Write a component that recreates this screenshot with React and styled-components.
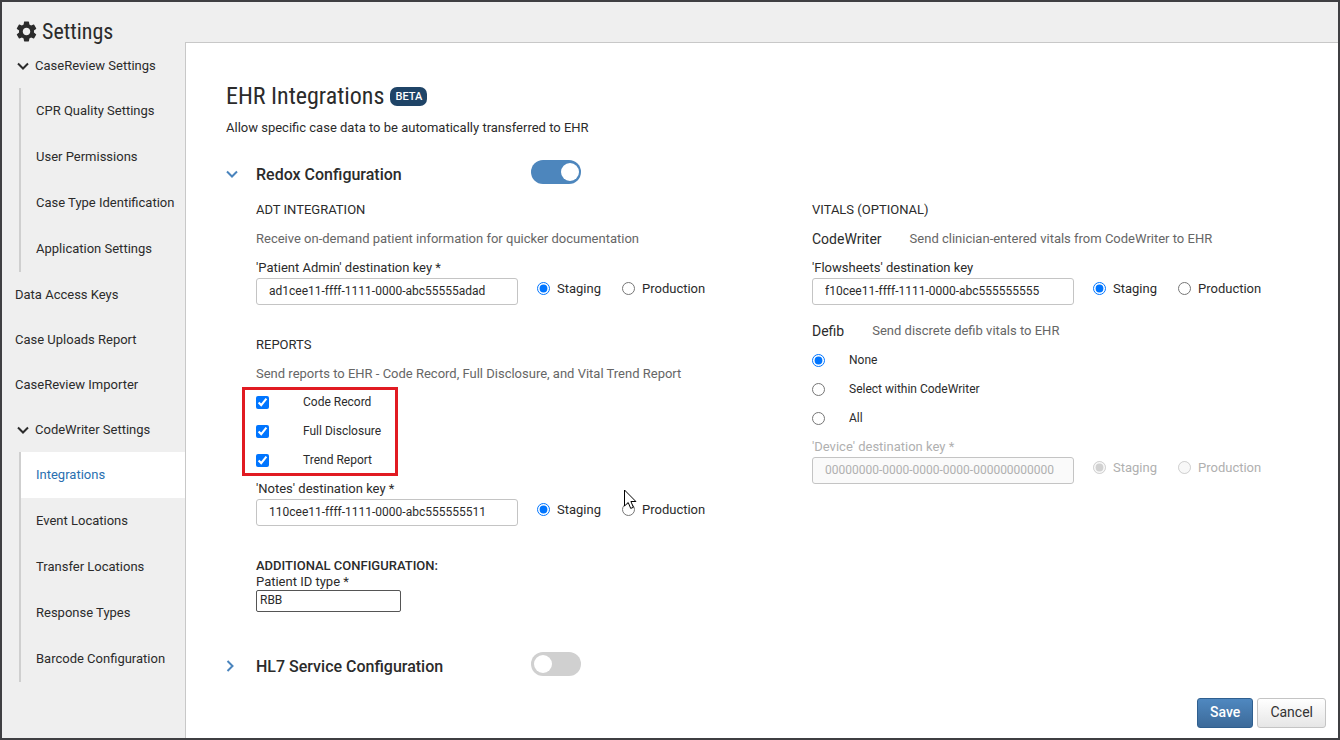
import React, { useState } from 'react';
import styled, { createGlobalStyle } from 'styled-components';
import { MdSettings } from 'react-icons/md';

const GlobalStyle = createGlobalStyle`
    * {
        box-sizing: border-box;
    }

    body {
        margin: 0;
        background-color: #efefef;
        color: #2b2b2b;
        font-family: Roboto, "Liberation Sans", sans-serif;
        font-size: 13px;
        line-height: 16px;
    }

    input, button {
        font-family: inherit;
        color: inherit;
    }
`;

const Page = styled.div`
    display: flex;
    min-height: 100vh;
    border: 2px solid #3f3f42;
`;

const Sidebar = styled.aside`
    flex: 0 0 183px;
    padding-top: 18px;
`;

const SidebarTitle = styled.h2`
    display: flex;
    align-items: center;
    gap: 3px;
    margin: 0 0 0 12px;
    height: 23px;
    font-family: "Roboto Condensed", Roboto, sans-serif;
    font-size: 22px;
    font-weight: 400;
`;

const NavButton = styled.button`
    display: flex;
    align-items: center;
    gap: 6px;
    width: 100%;
    height: 45px;
    padding: 0 0 0 15px;
    border: 0;
    background: none;
    font-size: 13px;
    text-align: left;
    cursor: pointer;
`;

const NavLink = styled.a`
    display: flex;
    align-items: center;
    height: ${props => (props.$nested ? 46 : 45)}px;
    padding-left: ${props => (props.$nested ? 15 : 13)}px;
    background-color: ${props => (props.$active ? '#fff' : 'transparent')};
    color: ${props => (props.$active ? '#2a6fb0' : 'inherit')};
    text-decoration: none;
    white-space: nowrap;
`;

const NavGroup = styled.div`
    margin-left: 17px;
    border-left: 2px solid #cfcfcf;
`;

const Main = styled.main`
    flex: 1;
    display: flex;
    flex-direction: column;
    margin-top: 40px;
    padding-left: 40px;
    border-top: 1px solid #c8c8c8;
    border-left: 1px solid #c8c8c8;
    background-color: #fff;
`;

const TitleRow = styled.div`
    display: flex;
    align-items: center;
    gap: 6px;
    height: 28px;
    margin-top: 39px;
`;

const Title = styled.h1`
    margin: 0;
    font-family: "Roboto Condensed", Roboto, sans-serif;
    font-size: 24px;
    font-weight: 400;
`;

const Badge = styled.span`
    padding: 0 5px;
    border-radius: 7px;
    background-color: #1f4467;
    color: #fff;
    font-size: 11px;
    font-weight: 500;
    line-height: 19px;
`;

const Intro = styled.p`
    margin: 10px 0 24px;
`;

const SectionHeader = styled.div`
    display: flex;
    align-items: center;
    height: 24px;
`;

const SectionToggle = styled.button`
    display: flex;
    align-items: center;
    flex: 0 0 305px;
    padding: 4px 0 0;
    border: 0;
    background: none;
    font-size: 16px;
    font-weight: 500;
    text-align: left;
    cursor: pointer;

    svg {
        flex: 0 0 12px;
        margin-right: 18px;
        color: #4a84bd;
    }
`;

const Switch = styled.input`
    appearance: none;
    display: flex;
    align-items: center;
    width: 50px;
    height: 24px;
    margin: 0;
    padding: 0 2px 0 3px;
    border-radius: 12px;
    background-color: #d0d0d0;
    cursor: pointer;

    &::before {
        content: "";
        width: 18px;
        height: 18px;
        border-radius: 50%;
        background-color: #fff;
    }

    &:checked {
        justify-content: flex-end;
        background-color: #4d86bd;
    }
`;

const Columns = styled.div`
    display: grid;
    grid-template-columns: 1fr 1fr;
    margin: 18px 0 40px;
`;

const Column = styled.div`
    padding-left: 30px;
`;

const Heading = styled.h3`
    margin: 0 0 13px;
    font-size: 13px;
    font-weight: 400;
`;

const Description = styled.p`
    margin: 0 0 ${props => (props.$tight ? 5 : 13)}px;
    color: #666;
`;

const Inline = styled.div`
    display: flex;
    gap: 28px;
`;

const Term = styled.span`
    font-size: 14px;
`;

const Field = styled.div`
    margin-bottom: ${props => props.$space}px;
    color: ${props => (props.$disabled ? '#b0b0b0' : 'inherit')};
`;

const FieldLabel = styled.label`
    display: block;
    margin-bottom: 2px;
`;

const FieldRow = styled.div`
    display: flex;
    align-items: center;
`;

const KeyInput = styled.input`
    width: 262px;
    height: 27px;
    margin-right: 19px;
    padding: 0 12px 2px;
    border: 1px solid #c4c4c4;
    border-radius: 3px;
    background-color: #fff;
    font-size: 12px;

    &:disabled {
        background-color: #fafafa;
    }
`;

const Choice = styled.label`
    display: flex;
    align-items: center;
    gap: 7px;
    width: ${props => (props.$width ? props.$width + 'px' : 'auto')};
    padding-bottom: 6px;

    input {
        width: 13px;
        height: 13px;
        margin: 0;
    }
`;

const OptionList = styled.div`
    display: flex;
    flex-direction: column;
    gap: 13px;
    margin-bottom: 13px;
`;

const Highlighted = styled.div`
    width: 156px;
    margin: 0 0 5px -14px;
    padding: 4px 0 5px 11px;
    border: 3px solid #e11b22;

    > div {
        margin: 0;
    }
`;

const Option = styled.label`
    display: flex;
    align-items: center;
    gap: ${props => props.$gap}px;
    font-size: 12px;

    input {
        width: 13px;
        height: 13px;
        margin: 0;
    }
`;

const ExtraHeading = styled.h3`
    margin: 0;
    font-size: 13px;
    font-weight: 500;
`;

const TypeLabel = styled.label`
    display: block;
`;

const TypeInput = styled.input`
    display: block;
    width: 145px;
    height: 22px;
    padding: 0 3px 2px;
    border: 1px solid #555;
    border-radius: 2px;
    background-color: #fff;
    font-size: 12px;
`;

const Footer = styled.footer`
    display: flex;
    justify-content: flex-end;
    gap: 4px;
    margin-top: auto;
    padding: 0 12px 10px 0;
`;

const Button = styled.button`
    height: 30px;
    padding: 0 12px 2px;
    border: 1px solid ${props => (props.$primary ? '#2f5f8f' : '#c4c4c4')};
    border-radius: 3px;
    background: ${props => (props.$primary ? 'linear-gradient(#4f88c0, #3c6a99)' : 'linear-gradient(#fff, #e6e6e6)')};
    color: ${props => (props.$primary ? '#fff' : '#333')};
    font-size: 14px;
    font-weight: ${props => (props.$primary ? 500 : 400)};
    cursor: pointer;
`;

const CursorAnchor = styled.div`
    position: relative;
`;

const Cursor = styled.svg`
    position: absolute;
    left: 368px;
    top: 8px;
    pointer-events: none;
`;

const reviewLinks = ['CPR Quality Settings', 'User Permissions', 'Case Type Identification', 'Application Settings'];
const topLinks = ['Data Access Keys', 'Case Uploads Report', 'CaseReview Importer'];
const writerLinks = ['Integrations', 'Event Locations', 'Transfer Locations', 'Response Types', 'Barcode Configuration'];

function Chevron({ open }) {
    return (
        <svg width="12" height="12" viewBox="0 0 12 12" fill="none" stroke="currentColor" strokeWidth="2" aria-hidden="true">
            <path d={open ? 'M1 3.500l5 5 5-5' : 'M1.500 1l5 5-5 5'} />
        </svg>
    );
}

function NavSection({ title, links, active }) {
    const [open, setOpen] = useState(true);

    return (
        <>
            <NavButton type="button" aria-expanded={open} onClick={() => setOpen(!open)}>
                <Chevron open={open} />
                {title}
            </NavButton>
            {open && (
                <NavGroup>
                    {links.map(link => (
                        <NavLink key={link} href="#" $nested $active={link === active}>{link}</NavLink>
                    ))}
                </NavGroup>
            )}
        </>
    );
}

function DestinationKey({ id, label, value, space, disabled }) {
    const [env, setEnv] = useState('staging');

    return (
        <Field $space={space} $disabled={disabled}>
            <FieldLabel htmlFor={id}>{label}</FieldLabel>
            <FieldRow>
                <KeyInput id={id} type="text" defaultValue={value} disabled={disabled} />
                <Choice $width={85}>
                    <input type="radio" name={id + '-env'} checked={env === 'staging'} disabled={disabled} onChange={() => setEnv('staging')} />
                    Staging
                </Choice>
                <Choice>
                    <input type="radio" name={id + '-env'} checked={env === 'production'} disabled={disabled} onChange={() => setEnv('production')} />
                    Production
                </Choice>
            </FieldRow>
        </Field>
    );
}

function Section({ title, open, enabled, onOpen, onEnable }) {
    return (
        <SectionHeader>
            <SectionToggle type="button" aria-expanded={open} onClick={onOpen}>
                <Chevron open={open} />
                {title}
            </SectionToggle>
            <Switch type="checkbox" role="switch" aria-label={title} checked={enabled} onChange={onEnable} />
        </SectionHeader>
    );
}

export default function App() {
    const [redoxOpen, setRedoxOpen] = useState(true);
    const [redoxOn, setRedoxOn] = useState(true);
    const [hl7Open, setHl7Open] = useState(false);
    const [hl7On, setHl7On] = useState(false);

    return (
        <Page>
            <GlobalStyle />
            <Sidebar>
                <SidebarTitle><MdSettings size={25} />Settings</SidebarTitle>
                <nav>
                    <NavSection title="CaseReview Settings" links={reviewLinks} />
                    {topLinks.map(link => <NavLink key={link} href="#">{link}</NavLink>)}
                    <NavSection title="CodeWriter Settings" links={writerLinks} active="Integrations" />
                </nav>
            </Sidebar>
            <Main>
                <TitleRow>
                    <Title>EHR Integrations</Title>
                    <Badge>BETA</Badge>
                </TitleRow>
                <Intro>Allow specific case data to be automatically transferred to EHR</Intro>

                <Section
                    title="Redox Configuration"
                    open={redoxOpen}
                    enabled={redoxOn}
                    onOpen={() => setRedoxOpen(!redoxOpen)}
                    onEnable={() => setRedoxOn(!redoxOn)}
                />
                {redoxOpen && (
                    <Columns>
                        <Column>
                            <Heading>ADT INTEGRATION</Heading>
                            <Description>Receive on-demand patient information for quicker documentation</Description>
                            <DestinationKey id="patient-admin" label="'Patient Admin' destination key *" value="ad1cee11-ffff-1111-0000-abc55555adad" space={32} />

                            <Heading>REPORTS</Heading>
                            <Description $tight>Send reports to EHR - Code Record, Full Disclosure, and Vital Trend Report</Description>
                            <Highlighted>
                                <OptionList>
                                    {['Code Record', 'Full Disclosure', 'Trend Report'].map(name => (
                                        <Option key={name} $gap={34}>
                                            <input type="checkbox" defaultChecked />
                                            {name}
                                        </Option>
                                    ))}
                                </OptionList>
                            </Highlighted>
                            <CursorAnchor>
                                <DestinationKey id="notes" label="'Notes' destination key *" value="110cee11-ffff-1111-0000-abc555555511" space={32} />
                                <Cursor width="13" height="21" viewBox="0 0 13 21" aria-hidden="true">
                                    <path d="M.5 1v16l3.700-3.500 2.500 5.900 2.700-1.100-2.500-5.800h5z" fill="#fff" stroke="#000" />
                                </Cursor>
                            </CursorAnchor>

                            <ExtraHeading>ADDITIONAL CONFIGURATION:</ExtraHeading>
                            <TypeLabel htmlFor="patient-id-type">Patient ID type *</TypeLabel>
                            <TypeInput id="patient-id-type" type="text" defaultValue="RBB" />
                        </Column>
                        <Column>
                            <Heading>VITALS (OPTIONAL)</Heading>
                            <Inline>
                                <Term>CodeWriter</Term>
                                <Description>Send clinician-entered vitals from CodeWriter to EHR</Description>
                            </Inline>
                            <DestinationKey id="flowsheets" label="'Flowsheets' destination key" value="f10cee11-ffff-1111-0000-abc555555555" space={18} />

                            <Inline>
                                <Term>Defib</Term>
                                <Description>Send discrete defib vitals to EHR</Description>
                            </Inline>
                            <OptionList>
                                {['None', 'Select within CodeWriter', 'All'].map(name => (
                                    <Option key={name} $gap={24}>
                                        <input type="radio" name="defib" defaultChecked={name === 'None'} />
                                        {name}
                                    </Option>
                                ))}
                            </OptionList>
                            <DestinationKey id="device" label="'Device' destination key *" value="00000000-0000-0000-0000-000000000000" space={0} disabled />
                        </Column>
                    </Columns>
                )}

                <Section
                    title="HL7 Service Configuration"
                    open={hl7Open}
                    enabled={hl7On}
                    onOpen={() => setHl7Open(!hl7Open)}
                    onEnable={() => setHl7On(!hl7On)}
                />
                <Footer>
                    <Button type="button" $primary>Save</Button>
                    <Button type="button">Cancel</Button>
                </Footer>
            </Main>
        </Page>
    );
}
